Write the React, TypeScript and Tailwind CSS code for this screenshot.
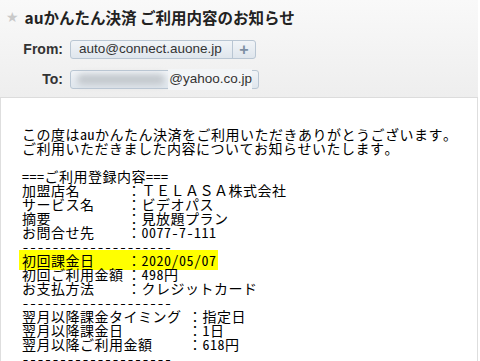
import type React from "react";

const bodyFont = {
  fontFamily: '"Noto Sans Mono CJK JP", "Noto Sans CJK JP", monospace',
};

const Line = ({ children }: { children?: React.ReactNode }) => (
  <div className="h-[14px] leading-[14px] whitespace-pre">{children}</div>
);

const Row = ({
  label,
  value,
  labelWidth = "w-[105px]",
  highlight = false,
}: {
  label: string;
  value: string;
  labelWidth?: string;
  highlight?: boolean;
}) => (
  <div
    className={`flex h-[14px] leading-[14px] whitespace-pre ${
      highlight ? "w-fit bg-[#ffff00] -ml-[3px] pl-[3px] pr-[1px] -my-[3px] py-[3px] box-content" : ""
    }`}
  >
    <span className={labelWidth}>{label}</span>
    <span className="w-[14.5px] text-center">：</span>
    <span>{value}</span>
  </div>
);

const Chip = ({ children, width }: { children: React.ReactNode; width: string }) => (
  <div
    className={`flex h-[19px] ${width} items-center rounded-[3px] border border-[#b9c6d3] bg-gradient-to-b from-[#f1f4f7] to-[#dfe6ed] text-[13.5px] text-[#333]`}
    style={{ fontFamily: '"Liberation Sans", Arial, sans-serif' }}
  >
    {children}
  </div>
);

export default function App() {
  const dashes = "--------------------";
  return (
    <div className="h-[361px] w-[480px] overflow-hidden bg-white">
      {/* header */}
      <div className="h-[98px] w-[478px] border-b border-[#dcdcdc] bg-gradient-to-b from-[#f9f9f9] to-[#eeeeee]">
        <div className="flex items-center gap-[6px] pl-[6px] pt-[6px]">
          <span className="text-[14px] leading-[22px] text-[#c9c9c9]" style={{ fontFamily: '"DejaVu Sans", sans-serif' }}>
            ★
          </span>
          <span
            className="text-[15.5px] font-bold leading-[22px] text-[#222]"
            style={{ fontFamily: '"Noto Sans CJK JP", sans-serif' }}
          >
            auかんたん決済 ご利用内容のお知らせ
          </span>
        </div>

        <div
          className="mt-[11px] flex flex-col gap-[9px]"
          style={{ fontFamily: '"Liberation Sans", Arial, sans-serif' }}
        >
          <div className="flex items-center">
            <span className="w-[63px] text-right text-[14px] font-bold text-[#333]">From:</span>
            <div className="ml-[7px] flex">
              <Chip width="w-[186px]">
                <span className="flex-1 pl-[8px]">auto@connect.auone.jp</span>
                <span className="flex h-full w-[23px] items-center justify-center border-l border-[#b9c6d3] text-[16px] font-bold text-[#7d8fa3]">
                  +
                </span>
              </Chip>
            </div>
          </div>
          <div className="flex items-center">
            <span className="w-[63px] text-right text-[14px] font-bold text-[#333]">To:</span>
            <div className="ml-[7px] flex">
              <Chip width="w-[189px]">
                <div className="ml-[6px] h-[11px] w-[88px] rounded-full bg-[#c4c9ce] blur-[3px]" />
                <span className="ml-auto mr-[6px] bg-[#f3f5f7] pl-[1px]">@yahoo.co.jp</span>
              </Chip>
            </div>
          </div>
        </div>
      </div>

      {/* body */}
      <div
        className="h-[263px] w-[478px] border-x border-[#dedede] pl-[21px] pt-[29px] text-[14px] tracking-[0.5px] text-black"
        style={bodyFont}
      >
        <Line>この度はauかんたん決済をご利用いただきありがとうございます。</Line>
        <Line>ご利用いただきました内容についてお知らせいたします。</Line>
        <Line> </Line>
        <Line>===ご利用登録内容===</Line>
        <Row label="加盟店名" value="ＴＥＬＡＳＡ株式会社" />
        <Row label="サービス名" value="ビデオパス" />
        <Row label="摘要" value="見放題プラン" />
        <Row label="お問合せ先" value="0077-7-111" />
        <Line>{dashes}</Line>
        <Row label="初回課金日" value="2020/05/07" highlight />
        <Row label="初回ご利用金額" value="498円" />
        <Row label="お支払方法" value="クレジットカード" />
        <Line>{dashes}</Line>
        <Row label="翌月以降課金タイミング" value="指定日" labelWidth="w-[166px]" />
        <Row label="翌月以降課金日" value="1日" labelWidth="w-[166px]" />
        <Row label="翌月以降ご利用金額" value="618円" labelWidth="w-[166px]" />
        <Line>{dashes}</Line>
      </div>
    </div>
  );
}
